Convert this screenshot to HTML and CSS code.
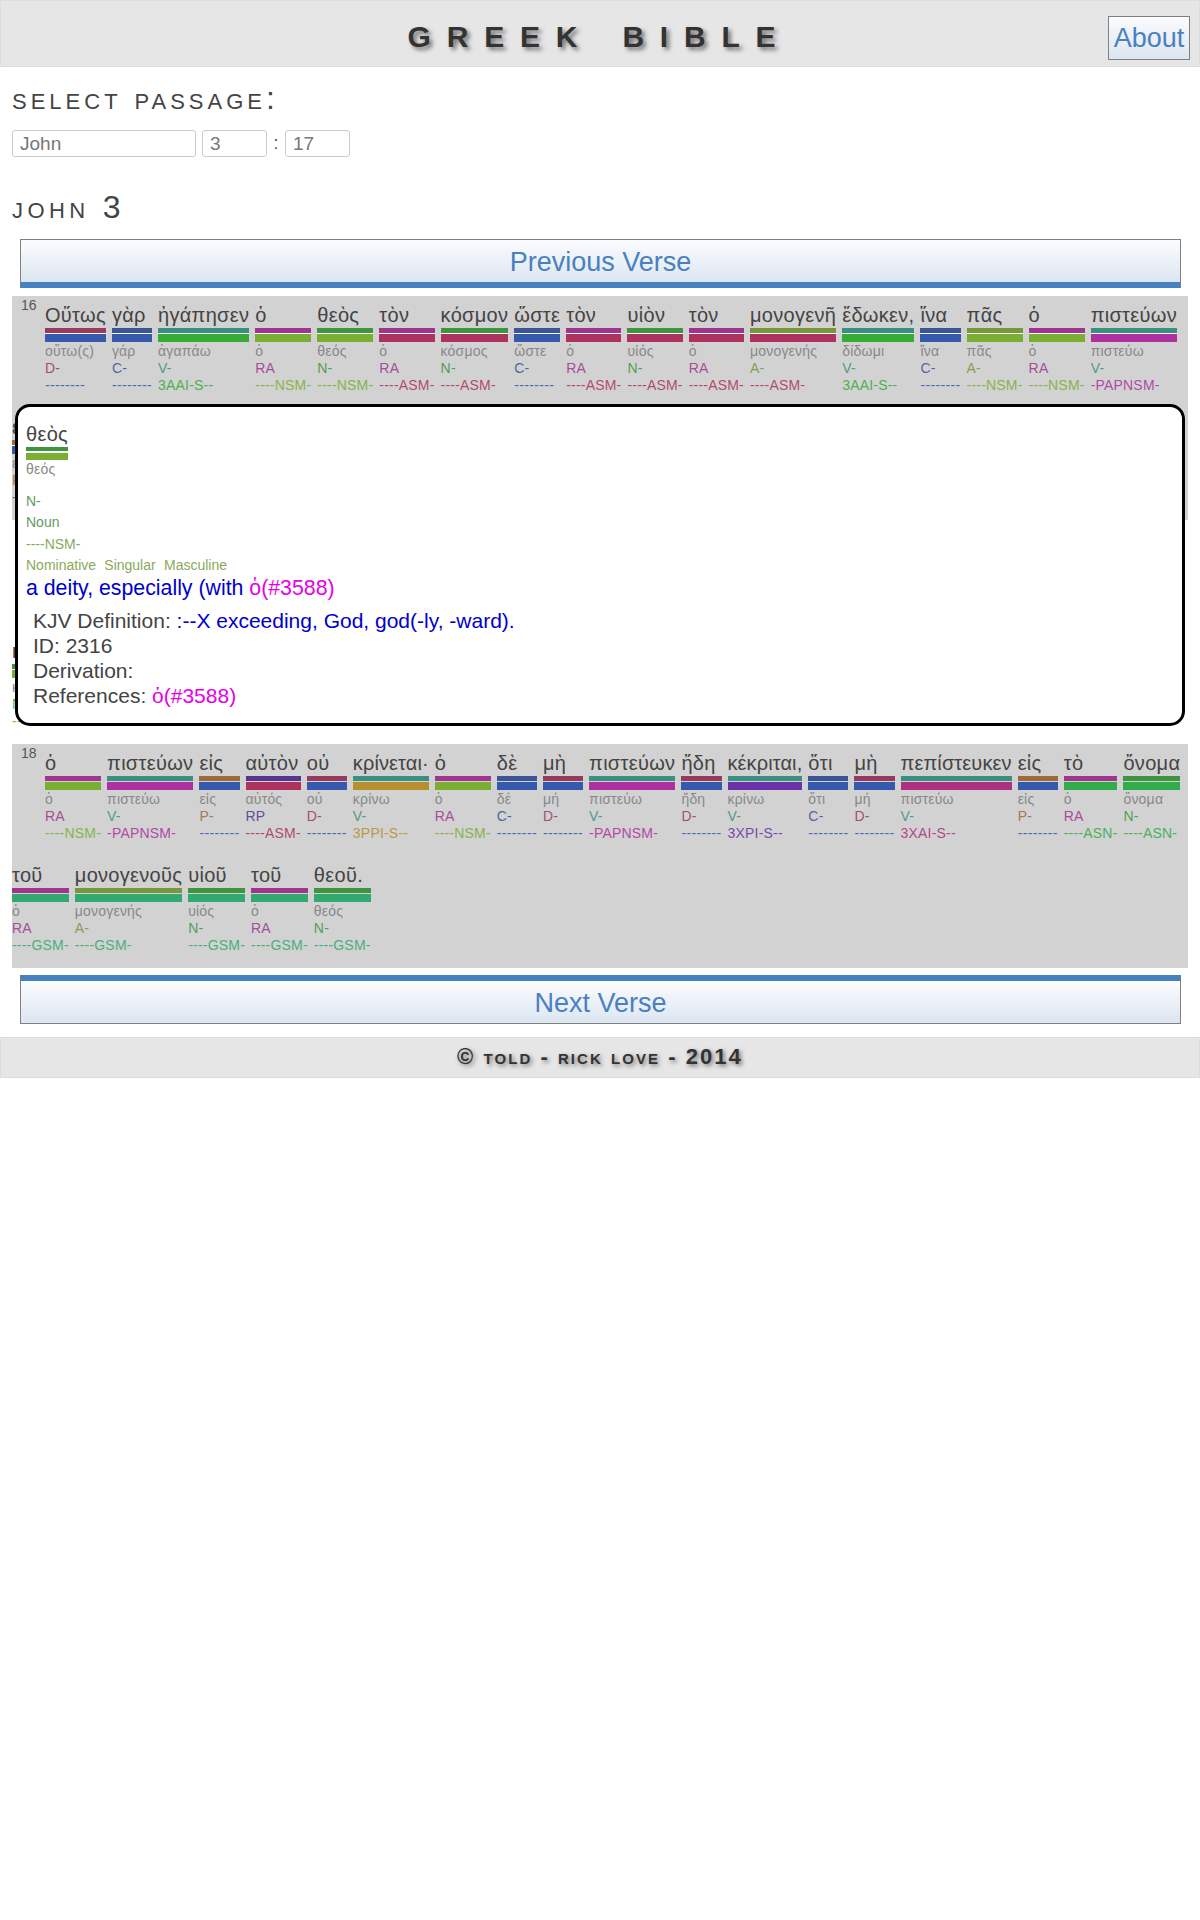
FILE: index.html
```html
<!DOCTYPE html>
<html lang="el">
<head>
<meta charset="utf-8">
<title>Greek Bible</title>
<link rel="stylesheet" href="styles.css">
</head>
<body>
<header class="top">
  <span></span>
  <h1 class="brand">GREEK BIBLE</h1>
  <a class="btn about" href="#">About</a>
</header>
<h2 class="sect first">select passage:</h2>
<form class="picker">
  <input class="field book" value="John">
  <input class="field num" value="3">
  <span class="colon">:</span>
  <input class="field num" value="17">
</form>
<h2 class="sect chap">john 3</h2>
<a class="btn nav prev" href="#">Previous Verse</a>

<section class="verse shaded lit">
  <div class="line">
    <span class="vn">16</span>
    <div class="w p-d m-x"><div class="g">Οὕτως</div><div class="bar"><i></i><i></i></div><div class="l">οὕτω(ς)</div><div class="pos">D-</div><div class="mo">--------</div></div>
    <div class="w p-c m-x"><div class="g">γὰρ</div><div class="bar"><i></i><i></i></div><div class="l">γάρ</div><div class="pos">C-</div><div class="mo">--------</div></div>
    <div class="w p-v m-g"><div class="g">ἠγάπησεν</div><div class="bar"><i></i><i></i></div><div class="l">ἀγαπάω</div><div class="pos">V-</div><div class="mo">3AAI-S--</div></div>
    <div class="w p-r m-nsm"><div class="g">ὁ</div><div class="bar"><i></i><i></i></div><div class="l">ὁ</div><div class="pos">RA</div><div class="mo">----NSM-</div></div>
    <div class="w p-n m-nsm"><div class="g">θεὸς</div><div class="bar"><i></i><i></i></div><div class="l">θεός</div><div class="pos">N-</div><div class="mo">----NSM-</div></div>
    <div class="w p-r m-asm"><div class="g">τὸν</div><div class="bar"><i></i><i></i></div><div class="l">ὁ</div><div class="pos">RA</div><div class="mo">----ASM-</div></div>
    <div class="w p-n m-asm"><div class="g">κόσμον</div><div class="bar"><i></i><i></i></div><div class="l">κόσμος</div><div class="pos">N-</div><div class="mo">----ASM-</div></div>
    <div class="w p-c m-x"><div class="g">ὥστε</div><div class="bar"><i></i><i></i></div><div class="l">ὥστε</div><div class="pos">C-</div><div class="mo">--------</div></div>
    <div class="w p-r m-asm"><div class="g">τὸν</div><div class="bar"><i></i><i></i></div><div class="l">ὁ</div><div class="pos">RA</div><div class="mo">----ASM-</div></div>
    <div class="w p-n m-asm"><div class="g">υἱὸν</div><div class="bar"><i></i><i></i></div><div class="l">υἱός</div><div class="pos">N-</div><div class="mo">----ASM-</div></div>
    <div class="w p-r m-asm"><div class="g">τὸν</div><div class="bar"><i></i><i></i></div><div class="l">ὁ</div><div class="pos">RA</div><div class="mo">----ASM-</div></div>
    <div class="w p-a m-asm"><div class="g">μονογενῆ</div><div class="bar"><i></i><i></i></div><div class="l">μονογενής</div><div class="pos">A-</div><div class="mo">----ASM-</div></div>
    <div class="w p-v m-g"><div class="g">ἔδωκεν,</div><div class="bar"><i></i><i></i></div><div class="l">δίδωμι</div><div class="pos">V-</div><div class="mo">3AAI-S--</div></div>
    <div class="w p-c m-x"><div class="g">ἵνα</div><div class="bar"><i></i><i></i></div><div class="l">ἵνα</div><div class="pos">C-</div><div class="mo">--------</div></div>
    <div class="w p-a m-nsm"><div class="g">πᾶς</div><div class="bar"><i></i><i></i></div><div class="l">πᾶς</div><div class="pos">A-</div><div class="mo">----NSM-</div></div>
    <div class="w p-r m-nsm"><div class="g">ὁ</div><div class="bar"><i></i><i></i></div><div class="l">ὁ</div><div class="pos">RA</div><div class="mo">----NSM-</div></div>
    <div class="w p-v m-pap"><div class="g">πιστεύων</div><div class="bar"><i></i><i></i></div><div class="l">πιστεύω</div><div class="pos">V-</div><div class="mo">-PAPNSM-</div></div>
  </div>
  <div class="line">
    <div class="w p-p m-x"><div class="g">εἰς</div><div class="bar"><i></i><i></i></div><div class="l">εἰς</div><div class="pos">P-</div><div class="mo">--------</div></div>
    <div class="w p-rp m-asm"><div class="g">αὐτὸν</div><div class="bar"><i></i><i></i></div><div class="l">αὐτός</div><div class="pos">RP</div><div class="mo">----ASM-</div></div>
    <div class="w p-d m-x"><div class="g">μὴ</div><div class="bar"><i></i><i></i></div><div class="l">μή</div><div class="pos">D-</div><div class="mo">--------</div></div>
  </div>
</section>

<section class="verse">
  <div class="line">
    <span class="vn">17</span>
    <div class="w p-d m-x"><div class="g">οὐ</div><div class="bar"><i></i><i></i></div><div class="l">οὐ</div><div class="pos">D-</div><div class="mo">--------</div></div>
    <div class="w p-c m-x"><div class="g">γὰρ</div><div class="bar"><i></i><i></i></div><div class="l">γάρ</div><div class="pos">C-</div><div class="mo">--------</div></div>
    <div class="w p-r m-nsm"><div class="g">ὁ</div><div class="bar"><i></i><i></i></div><div class="l">ὁ</div><div class="pos">RA</div><div class="mo">----NSM-</div></div>
    <div class="w p-n m-nsm"><div class="g">θεὸς</div><div class="bar"><i></i><i></i></div><div class="l">θεός</div><div class="pos">N-</div><div class="mo">----NSM-</div></div>
  </div>
  <div class="line">
    <div class="w p-n m-nsm"><div class="g">κόσμος</div><div class="bar"><i></i><i></i></div><div class="l">κόσμος</div><div class="pos">N-</div><div class="mo">----NSM-</div></div>
  </div>
</section>

<section class="verse shaded">
  <div class="line">
    <span class="vn">18</span>
    <div class="w p-r m-nsm"><div class="g">ὁ</div><div class="bar"><i></i><i></i></div><div class="l">ὁ</div><div class="pos">RA</div><div class="mo">----NSM-</div></div>
    <div class="w p-v m-pap"><div class="g">πιστεύων</div><div class="bar"><i></i><i></i></div><div class="l">πιστεύω</div><div class="pos">V-</div><div class="mo">-PAPNSM-</div></div>
    <div class="w p-p m-x"><div class="g">εἰς</div><div class="bar"><i></i><i></i></div><div class="l">εἰς</div><div class="pos">P-</div><div class="mo">--------</div></div>
    <div class="w p-rp m-asm"><div class="g">αὐτὸν</div><div class="bar"><i></i><i></i></div><div class="l">αὐτός</div><div class="pos">RP</div><div class="mo">----ASM-</div></div>
    <div class="w p-d m-x"><div class="g">οὐ</div><div class="bar"><i></i><i></i></div><div class="l">οὐ</div><div class="pos">D-</div><div class="mo">--------</div></div>
    <div class="w p-v m-ppi"><div class="g tight">κρίνεται·</div><div class="bar"><i></i><i></i></div><div class="l">κρίνω</div><div class="pos">V-</div><div class="mo">3PPI-S--</div></div>
    <div class="w p-r m-nsm"><div class="g">ὁ</div><div class="bar"><i></i><i></i></div><div class="l">ὁ</div><div class="pos">RA</div><div class="mo">----NSM-</div></div>
    <div class="w p-c m-x"><div class="g">δὲ</div><div class="bar"><i></i><i></i></div><div class="l">δέ</div><div class="pos">C-</div><div class="mo">--------</div></div>
    <div class="w p-d m-x"><div class="g">μὴ</div><div class="bar"><i></i><i></i></div><div class="l">μή</div><div class="pos">D-</div><div class="mo">--------</div></div>
    <div class="w p-v m-pap"><div class="g">πιστεύων</div><div class="bar"><i></i><i></i></div><div class="l">πιστεύω</div><div class="pos">V-</div><div class="mo">-PAPNSM-</div></div>
    <div class="w p-d m-x"><div class="g">ἤδη</div><div class="bar"><i></i><i></i></div><div class="l">ἤδη</div><div class="pos">D-</div><div class="mo">--------</div></div>
    <div class="w p-v m-xpi"><div class="g tight">κέκριται,</div><div class="bar"><i></i><i></i></div><div class="l">κρίνω</div><div class="pos">V-</div><div class="mo">3XPI-S--</div></div>
    <div class="w p-c m-x"><div class="g">ὅτι</div><div class="bar"><i></i><i></i></div><div class="l">ὅτι</div><div class="pos">C-</div><div class="mo">--------</div></div>
    <div class="w p-d m-x"><div class="g">μὴ</div><div class="bar"><i></i><i></i></div><div class="l">μή</div><div class="pos">D-</div><div class="mo">--------</div></div>
    <div class="w p-v m-xai"><div class="g tight">πεπίστευκεν</div><div class="bar"><i></i><i></i></div><div class="l">πιστεύω</div><div class="pos">V-</div><div class="mo">3XAI-S--</div></div>
    <div class="w p-p m-x"><div class="g">εἰς</div><div class="bar"><i></i><i></i></div><div class="l">εἰς</div><div class="pos">P-</div><div class="mo">--------</div></div>
    <div class="w p-r m-asn"><div class="g">τὸ</div><div class="bar"><i></i><i></i></div><div class="l">ὁ</div><div class="pos">RA</div><div class="mo">----ASN-</div></div>
    <div class="w p-n m-asn"><div class="g">ὄνομα</div><div class="bar"><i></i><i></i></div><div class="l">ὄνομα</div><div class="pos">N-</div><div class="mo">----ASN-</div></div>
  </div>
  <div class="line">
    <div class="w p-r m-gsm"><div class="g">τοῦ</div><div class="bar"><i></i><i></i></div><div class="l">ὁ</div><div class="pos">RA</div><div class="mo">----GSM-</div></div>
    <div class="w p-a m-gsm"><div class="g">μονογενοῦς</div><div class="bar"><i></i><i></i></div><div class="l">μονογενής</div><div class="pos">A-</div><div class="mo">----GSM-</div></div>
    <div class="w p-n m-gsm"><div class="g">υἱοῦ</div><div class="bar"><i></i><i></i></div><div class="l">υἱός</div><div class="pos">N-</div><div class="mo">----GSM-</div></div>
    <div class="w p-r m-gsm"><div class="g">τοῦ</div><div class="bar"><i></i><i></i></div><div class="l">ὁ</div><div class="pos">RA</div><div class="mo">----GSM-</div></div>
    <div class="w p-n m-gsm"><div class="g">θεοῦ.</div><div class="bar"><i></i><i></i></div><div class="l">θεός</div><div class="pos">N-</div><div class="mo">----GSM-</div></div>
  </div>
</section>

<a class="btn nav next" href="#">Next Verse</a>
<footer class="foot">© told - rick love - 2014</footer>

<aside class="pop">
  <div class="w pop-word p-n m-nsm"><div class="g">θεὸς</div><div class="bar"><i></i><i></i></div><div class="l">θεός</div></div>
  <div class="tags p-n m-nsm">
    <div class="tag-p">N-</div>
    <div class="tag-p">Noun</div>
    <div class="tag-m">----NSM-</div>
    <div class="tag-m spaced">Nominative Singular Masculine</div>
  </div>
  <div class="gloss">a deity, especially (with <a class="ref" href="#">ὁ(#3588)</a></div>
  <div class="facts">
    <div>KJV Definition: <span class="kjv">:--X exceeding, God, god(-ly, -ward).</span></div>
    <div>ID: 2316</div>
    <div>Derivation:</div>
    <div>References: <a class="ref" href="#">ὁ(#3588)</a></div>
  </div>
</aside>
</body>
</html>
```

FILE: styles.css
```css
* { box-sizing: border-box; }
html, body { margin: 0; background: #fff; }
body {
  position: relative;
  font-family: "Liberation Sans", Arial, sans-serif;
  color: #444;
}
.top {
  height: 67px;
  display: grid;
  grid-template-columns: 1fr auto 1fr;
  align-items: center;
  background: #e6e6e6;
  border: 1px solid #ddd;
  padding: 6px 9px 0 0;
}
.brand {
  margin: 0 0 0 8px;
  font-size: 30px;
  font-weight: bold;
  letter-spacing: 15.8px;
  word-spacing: 5px;
  color: #333;
  text-shadow: 3px 3px 4px rgba(0, 0, 0, .5);
}
.btn {
  display: block;
  text-decoration: none;
  color: #4a80bf;
  font-size: 27px;
  text-align: center;
  background: linear-gradient(#fbfcfe, #dce6f1);
  border: 1px solid #808080;
}
.about {
  justify-self: end;
  align-self: end;
  margin-bottom: 6px;
  width: 82px;
  height: 44px;
  line-height: 42px;
}
.sect {
  margin: 0;
  font-size: 32px;
  font-weight: normal;
  font-variant: small-caps;
  letter-spacing: 4px;
  line-height: 37px;
  color: #444;
  padding-left: 12px;
}
.first { margin-top: 13px; }
.chap { margin-top: 32px; letter-spacing: 4.4px; }
.picker {
  display: flex;
  align-items: center;
  margin: 13px 0 0 12px;
}
.field {
  height: 27px;
  border: 1px solid #ccc;
  border-radius: 3px;
  padding: 1px 7px 0;
  font: 19px "Liberation Sans", Arial, sans-serif;
  color: #777;
  background: #fff;
}
.book { width: 184px; margin-right: 6px; }
.num { width: 65px; }
.colon { width: 18px; text-align: center; font-size: 18px; color: #555; }
.nav {
  height: 49px;
  margin: 0 19px 0 20px;
  line-height: 44px;
}
.prev { margin-top: 13px; border-bottom: 6px solid #4682c0; margin-bottom: 8px; }
.next { margin-top: 7px; border-top: 6px solid #4682c0; }

.verse { margin: 0 12px; }
.shaded { background: #d2d2d2; }
.line {
  display: flex;
  gap: 6px;
  height: 112px;
}
.vn {
  width: 18px;
  margin-left: 9px;
  font-size: 14px;
  line-height: 18px;
  color: #555;
}
.w { flex: none; }
.g {
  padding-top: 6px;
  font-size: 20px;
  line-height: 26px;
  letter-spacing: .3px;
  color: #444;
  white-space: nowrap;
}
.g.tight { letter-spacing: .1px; }
.bar i { display: block; }
.bar i:first-child { height: 5px; margin-bottom: 1px; background: var(--p); }
.bar i:last-child { height: 8px; background: var(--m); }
.lit .bar i:first-child { box-shadow: 0 1px 0 rgba(255, 255, 255, .85); }
.l, .pos, .mo {
  font-size: 14px;
  line-height: 17px;
  letter-spacing: .2px;
  white-space: nowrap;
}
.l { color: #888; padding-top: 1px; line-height: 16.5px; }
.pos { color: var(--p); opacity: .85; }
.mo { color: var(--m); opacity: .85; }
.m-x .mo { letter-spacing: .35px; }

.p-d { --p: #963b5e; }
.p-c { --p: #3c5596; }
.p-v { --p: #3a9080; }
.p-r { --p: #a0358f; }
.p-n { --p: #3f9440; }
.p-a { --p: #76973b; }
.p-p { --p: #9c6b38; }
.p-rp { --p: #55358f; }
.m-x { --m: #3559ad; }
.m-g { --m: #36ab36; }
.m-nsm { --m: #7aaf33; }
.m-asm { --m: #ae325f; }
.m-pap { --m: #ae30a0; }
.m-gsm { --m: #32a96f; }
.m-ppi { --m: #b6902e; }
.m-xpi { --m: #6a33a9; }
.m-xai { --m: #ae3080; }
.m-asn { --m: #32ab4a; }

.foot {
  margin-top: 13px;
  height: 41px;
  background: #e6e6e6;
  border: 1px solid #ddd;
  text-align: center;
  font-size: 22px;
  font-weight: bold;
  font-variant: small-caps;
  letter-spacing: 2.05px;
  line-height: 38px;
  color: #333;
  text-shadow: 2px 2px 4px rgba(0, 0, 0, .5);
}

.pop {
  position: absolute;
  left: 15px;
  top: 404px;
  width: 1170px;
  height: 322px;
  padding: 8px 8px 0;
  background: #fff;
  border: 3px solid #000;
  border-radius: 15px;
}
.pop-word { display: inline-block; vertical-align: top; }
.pop-word .bar i:first-child { height: 4px; margin-bottom: 2px; }
.pop-word .bar i:last-child { height: 7px; }
.tags {
  margin-top: 13px;
  font-size: 14px;
  line-height: 21.5px;
  height: 85px;
}
.tag-p { color: #5f9a5f; }
.tag-m { color: #8aa95a; }
.spaced { word-spacing: 4.4px; }
.gloss {
  font-size: 21.3px;
  line-height: 24px;
  color: #0000cc;
}
.ref { color: #e600e6; text-decoration: none; }
.facts {
  margin: 8px 0 0 7px;
  font-size: 21px;
  line-height: 25px;
  color: #444;
}
.kjv { color: #0000cc; }
```
